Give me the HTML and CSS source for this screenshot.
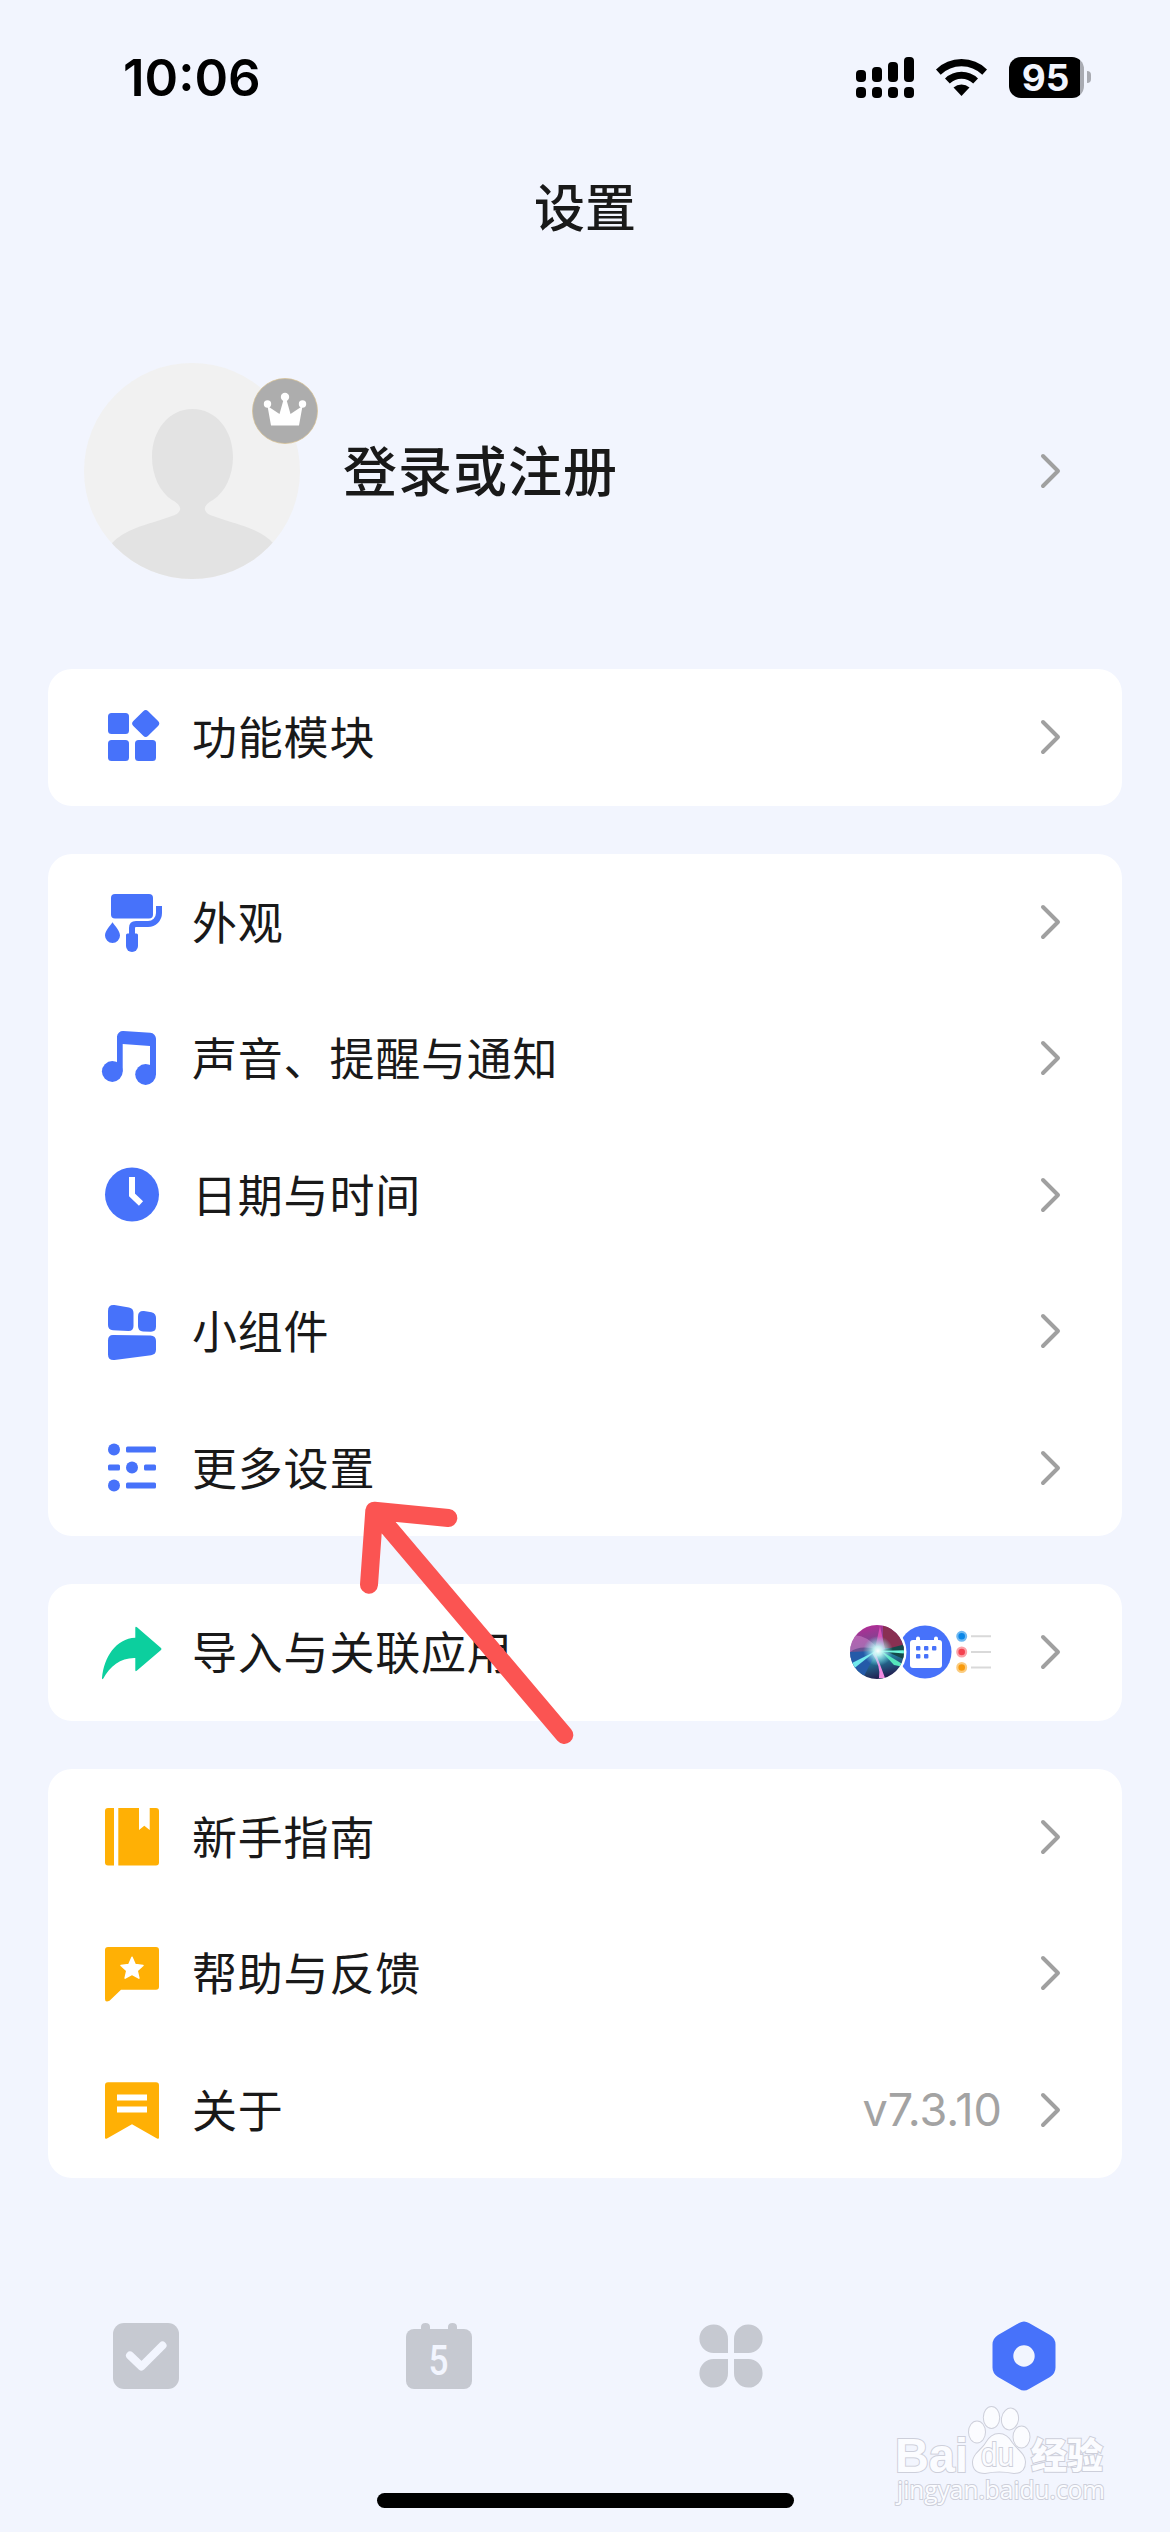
FILE: index.html
```html
<!DOCTYPE html>
<html lang="zh-CN">
<head>
<meta charset="utf-8">
<title>设置</title>
<link rel="stylesheet" href="styles.css">
</head>
<body>
<div class="screen">
  <header class="status">
    <span class="time">10:06</span>
    <div class="indicators">
      <svg class="signal" viewBox="0 0 58 41"><rect x="0" y="13" width="10" height="12" rx="4"/><rect x="16" y="10" width="10" height="15" rx="4"/><rect x="32" y="5" width="10" height="20" rx="4"/><rect x="48" y="0" width="10" height="25" rx="4"/><rect x="0" y="30" width="10" height="11" rx="4"/><rect x="16" y="30" width="10" height="11" rx="4"/><rect x="32" y="30" width="10" height="11" rx="4"/><rect x="48" y="30" width="10" height="11" rx="4"/></svg>
      <svg class="wifi" viewBox="0 0 51 37"><path d="M0 10.500Q10.500 0 25.500 0T51 10.500L46.300 15.700Q37.500 7.200 25.500 7.200T4.700 15.700z"/><path d="M9 19.500Q16 12.800 25.500 12.800T42 19.500L37.200 24.500Q32.200 19.800 25.500 19.800T13.800 24.500z"/><path d="M17.500 28.500Q21 25.500 25.500 25.500T33.500 28.500L25.500 37z"/></svg>
      <div class="battery"><span>95</span></div>
    </div>
  </header>
  <h1 class="title">设置</h1>

  <section class="profile">
    <div class="avatar">
      <svg viewBox="0 0 216 216"><defs><clipPath id="round"><circle cx="108" cy="108" r="108"/></clipPath></defs><circle cx="108" cy="108" r="108" fill="#f1f1f1"/><path clip-path="url(#round)" fill="#e3e3e3" d="M108.500 46C132 46 149 67 149 94C149 113 141 129 129 137C123 140 120 144 121 147C122 150 125 152 129 153C143 158 155 161 165 165Q181 171 190 181V216H27V181Q36 171 52 165C62 161 74 158 88 153C92 152 95 150 96 147C97 144 94 140 88 137C76 129 68 113 68 94C68 67 85 46 108.500 46z"/></svg>
      <svg class="badge" viewBox="0 0 66 66"><circle cx="33" cy="33" r="32.500" fill="#adadad" stroke="#d8c08e" stroke-width=".7"/><g fill="#fff"><path d="M15.500 28L27.500 36L32 20H34L38.500 36L50.500 28L47 47.500H19z"/><circle cx="33" cy="19" r="4.200"/><circle cx="15.500" cy="26" r="3.700"/><circle cx="50.500" cy="26" r="3.700"/></g></svg>
    </div>
    <span class="name">登录或注册</span>
    <svg class="chevron" viewBox="0 0 20 34"><path d="M2 2L17 17L2 32"/></svg>
  </section>

  <main class="cards">
    <section class="card">
      <div class="row"><svg class="icon blue" viewBox="0 0 60 60"><rect x="6" y="6" width="21" height="21" rx="3.500"/><rect x="6" y="33" width="21" height="21" rx="3.500"/><rect x="33" y="33" width="21" height="21" rx="3.500"/><rect x="33.200" y="6" width="21" height="21" rx="3.500" transform="rotate(45 43.700 16.500)"/></svg><span class="label">功能模块</span><svg class="chevron" viewBox="0 0 20 34"><path d="M2 2L17 17L2 32"/></svg></div>
    </section>

    <section class="card">
      <div class="row"><svg class="icon blue" viewBox="0 0 60 60"><rect x="9" y="2" width="42" height="24.500" rx="4"/><path d="M10.500 30.300C13 34 18 39 18 43.500A7.500 7.500 0 0 1 3 43.500C3 39 8 34 10.500 30.300z"/><path d="M24 43Q24 41.500 25.500 41.500H34.500Q36 41.500 36 43V54A6 6 0 0 1 24 54z"/><path class="line" d="M57 14V21A11 11 0 0 1 46 32H34Q30 32 30 36V43"/></svg><span class="label">外观</span><svg class="chevron" viewBox="0 0 20 34"><path d="M2 2L17 17L2 32"/></svg></div>
      <div class="row"><svg class="icon blue" viewBox="0 0 60 60"><path d="M15 43V8.500A6 6 0 0 1 21.300 3L48.300 4.800A6 6 0 0 1 54 10.800V46.500H48V18L20.700 16V43.500z"/><circle cx="10.300" cy="43.500" r="10.400"/><circle cx="43.600" cy="46.500" r="10.400"/></svg><span class="label">声音、提醒与通知</span><svg class="chevron" viewBox="0 0 20 34"><path d="M2 2L17 17L2 32"/></svg></div>
      <div class="row"><svg class="icon blue" viewBox="0 0 60 60"><circle cx="30" cy="29.500" r="27"/><path class="cut" d="M30 12V30L39 38.500"/></svg><span class="label">日期与时间</span><svg class="chevron" viewBox="0 0 20 34"><path d="M2 2L17 17L2 32"/></svg></div>
      <div class="row"><svg class="icon blue" viewBox="0 0 60 60"><path d="M12.500 4.100L27 6.500Q31.500 7.300 31.500 12V25Q31.500 30 26.500 30L11 29.200Q6 29 6 24V10Q6 3.500 12.500 4.100z"/><path d="M42 10L49.500 11.200Q54 12.200 54 17V25.500Q54 30.700 49 30.700L41 30.500Q36 30 36 25V15.500Q36 9.500 42 10z"/><path d="M11 34L48.500 34.500Q54 34.700 54 40V48.500Q54 53.500 49 54.200L12.500 59Q6 59.500 6 53.500V39.500Q6 34 11 34z"/></svg><span class="label">小组件</span><svg class="chevron" viewBox="0 0 20 34"><path d="M2 2L17 17L2 32"/></svg></div>
      <div class="row"><svg class="icon blue" viewBox="0 0 60 60"><circle cx="12" cy="11.500" r="6"/><rect x="24" y="8.500" width="30" height="6" rx="1.500"/><rect x="6" y="26.500" width="12" height="6" rx="1.500"/><circle cx="30" cy="29.500" r="6"/><rect x="42" y="26.500" width="12" height="6" rx="1.500"/><circle cx="12" cy="47.500" r="6"/><rect x="24" y="44.500" width="30" height="6" rx="1.500"/></svg><span class="label">更多设置</span><svg class="chevron" viewBox="0 0 20 34"><path d="M2 2L17 17L2 32"/></svg></div>
    </section>

    <section class="card">
      <div class="row"><svg class="icon green" viewBox="0 0 60 60"><path d="M33.300 6Q33.300 4 35 5.200L59 26Q60 27 59 28L35 48.500Q33.300 50 33.300 48V36C19 35.500 8 44 1.300 56.500Q0 58 0 56C2 35 14 16.500 33.300 15.700z"/></svg><span class="label">导入与关联应用</span>
        <svg class="apps" viewBox="0 0 144 56"><defs>
          <linearGradient id="orb" x1=".3" y1="0" x2=".55" y2="1"><stop offset="0" stop-color="#b52b96"/><stop offset=".35" stop-color="#76498f"/><stop offset=".65" stop-color="#247b9d"/><stop offset="1" stop-color="#211b4d"/></linearGradient>
          <radialGradient id="glow"><stop offset="0" stop-color="#fff"/><stop offset=".3" stop-color="#c6fff8" stop-opacity=".9"/><stop offset="1" stop-color="#7be6ef" stop-opacity="0"/></radialGradient>
          <clipPath id="orbclip"><circle cx="28" cy="28" r="27"/></clipPath></defs>
          <circle cx="76" cy="28" r="26.500" fill="#4772fa"/><circle cx="28" cy="28" r="29.500" fill="#fff"/>
          <g clip-path="url(#orbclip)"><rect x="1" y="1" width="54" height="54" fill="url(#orb)"/><path d="M34 0L60 5V25L34 24z" fill="#893052"/><path d="M34 26L57 20V36z" fill="#154a4b"/><path d="M1 28L28 27L14 54L0 48z" fill="#245aa8"/><path d="M0 12Q16 8 30 26Q10 20 0 29z" fill="#c87fc7" opacity=".6"/><path d="M31 2L36 25L25 29z" fill="#ef55c2" opacity=".75"/><path d="M26 27L36 54H30Q32 42 23 29z" fill="#f18be1"/><path d="M32 27L60 44L45 41z" fill="#55e7bb"/><path d="M27 27L3 46L1 40z" fill="#70e9ed"/><path d="M26 27L60 26V30z" fill="#6ff7de"/><circle cx="29" cy="27" r="15" fill="url(#glow)"/></g>
          <rect x="61" y="16" width="32" height="28" rx="3" fill="#fff"/><path d="M69 14.500V18M87 14.500V18" stroke="#fff" stroke-width="4" stroke-linecap="round"/><g fill="#4772fa"><rect x="67" y="22" width="4.400" height="4.400" rx="1"/><rect x="75" y="22" width="4.400" height="4.400" rx="1"/><rect x="83" y="22" width="4.400" height="4.400" rx="1"/><rect x="67" y="30" width="4.400" height="4.400" rx="1"/><rect x="75" y="30" width="4.400" height="4.400" rx="1"/></g>
          <g><circle cx="112.700" cy="12.300" r="4.400" fill="#0b87e8" stroke="#6fb9f2" stroke-width="2.200"/><circle cx="112.700" cy="28" r="4.400" fill="#f44250" stroke="#fba2a8" stroke-width="2.200"/><circle cx="112.700" cy="43.500" r="4.400" fill="#f89a0c" stroke="#fbcc80" stroke-width="2.200"/><path d="M122 12.300H142M122 28H142M122 43.500H142" stroke="#d9d9d9" stroke-width="2"/></g>
        </svg>
        <svg class="chevron" viewBox="0 0 20 34"><path d="M2 2L17 17L2 32"/></svg></div>
    </section>

    <section class="card">
      <div class="row"><svg class="icon orange" viewBox="0 0 60 60"><path d="M12 1V58.500H6Q3 58.500 3 55.500V4Q3 1 6 1z"/><path d="M16.300 1H37V23L42.300 18.700L47.700 23V1H54Q57 1 57 4V55.500Q57 58.500 54 58.500H16.300z"/></svg><span class="label">新手指南</span><svg class="chevron" viewBox="0 0 20 34"><path d="M2 2L17 17L2 32"/></svg></div>
      <div class="row"><svg class="icon orange" viewBox="0 0 60 60"><path d="M6 4H54Q57 4 57 7V43.700Q57 46.700 54 46.700H19L7.500 57.800Q3 60 3 56V7Q3 4 6 4z"/><path fill="#fff" stroke="#fff" stroke-width="1.500" stroke-linejoin="round" d="M30 14.200L33.200 21.600L41 22.400L35.200 27.600L36.900 35.200L30 31.400L23.100 35.200L24.800 27.600L19 22.400L26.800 21.600z"/></svg><span class="label">帮助与反馈</span><svg class="chevron" viewBox="0 0 20 34"><path d="M2 2L17 17L2 32"/></svg></div>
      <div class="row"><svg class="icon orange" viewBox="0 0 60 60"><path d="M6 2.300H54Q57 2.300 57 5.300V57.500Q57 59.500 55 58.500L30 44.300L5 58.500Q3 59.500 3 57.500V5.300Q3 2.300 6 2.300z"/><path fill="#fff" d="M15 14.500H45V20.500H15zM15 26.500H45V32.500H15z"/></svg><span class="label">关于</span><span class="version">v7.3.10</span><svg class="chevron" viewBox="0 0 20 34"><path d="M2 2L17 17L2 32"/></svg></div>
    </section>
  </main>

  <nav class="tabs">
    <div class="tab"><svg viewBox="0 0 70 70"><rect x="2" y="2" width="66" height="66" rx="11"/><path class="tick" d="M19 34.500L30.500 45.500L51.500 24.500"/></svg></div>
    <div class="tab"><svg viewBox="0 0 70 70"><rect x="2" y="8" width="66" height="60" rx="8"/><path d="M17 12V6Q17 2 21.500 2T26 6V12zM44 12V6Q44 2 48.500 2T53 6V12z"/><text x="24.500" y="53.500" textLength="20" lengthAdjust="spacingAndGlyphs">5</text></svg></div>
    <div class="tab"><svg viewBox="0 0 70 70"><path d="M32 32H18A14.300 14.300 0 1 1 32 18zM38 32H52A14.300 14.300 0 1 0 38 18zM32 38H18A14.300 14.300 0 1 0 32 52zM38 38H52A14.300 14.300 0 1 1 38 52z"/></svg></div>
    <div class="tab active"><svg viewBox="0 0 70 70"><path fill-rule="evenodd" d="M30 2Q35-1 40 2L61 14Q66.500 17.500 66.500 23.500V46.500Q66.500 52.500 61 56L40 68Q35 71 30 68L9 56Q3.500 52.500 3.500 46.500V23.500Q3.500 17.500 9 14zM35 24.300A10.700 10.700 0 1 0 35 45.700A10.700 10.700 0 1 0 35 24.300z"/></svg></div>
  </nav>
  <div class="home"></div>

  <svg class="arrow" viewBox="0 0 220 250"><path d="M108.300 28L34.300 20.700L29 94.700M34.300 20.700L224.300 245"/></svg>
  <svg class="watermark" viewBox="0 0 220 110">
    <g fill="#fbfcff" stroke="#cdcfda" stroke-width="2" paint-order="stroke">
      <text class="wm-latin" x="5" y="72" textLength="73" lengthAdjust="spacingAndGlyphs">Bai</text>
      <ellipse cx="87" cy="32" rx="8" ry="10.500"/><ellipse cx="101.500" cy="17.500" rx="7.700" ry="10.500"/><ellipse cx="120" cy="19" rx="8" ry="10.500" transform="rotate(10 120 19)"/><ellipse cx="131.500" cy="37" rx="8" ry="10.500"/>
      <path d="M109 34Q117 34 122 43C127 50 135 54 135 62Q135 73 124 73Q109 70 95 73Q83 73 83 62C83 54 92 50 96 43Q101 34 109 34z"/>
      <text class="wm-du" x="91" y="66" textLength="33" lengthAdjust="spacingAndGlyphs">du</text>
      <text class="wm-cjk" x="141" y="69">经验</text>
      <text class="wm-url" x="7" y="99" textLength="208" lengthAdjust="spacingAndGlyphs">jingyan.baidu.com</text>
    </g>
  </svg>
</div>
</body>
</html>
```
FILE: styles.css
```css
* { box-sizing: border-box; }
body { margin: 0; background: #f2f5fe; }
.screen {
  position: relative;
  display: flex;
  flex-direction: column;
  width: 1170px;
  height: 2532px;
  overflow: hidden;
  background: #f2f5fe;
  color: #191919;
  font-family: "Noto Sans CJK SC", sans-serif;
}
svg { display: block; flex: none; overflow: visible; }

.status {
  display: flex;
  align-items: center;
  justify-content: space-between;
  height: 155px;
  padding: 0 86px 0 123px;
  color: #000;
  font-family: Inter, sans-serif;
}
.time { font-size: 51px; font-weight: 600; }
.indicators { display: flex; align-items: center; }
.signal { width: 58px; height: 41px; margin-right: 22px; }
.wifi { width: 51px; height: 37px; margin-right: 22px; }
.battery {
  position: relative;
  width: 75px;
  height: 41px;
  border-radius: 12px;
  background: linear-gradient(90deg, #000 71px, #a9abb2 71px);
}
.battery::after {
  content: "";
  position: absolute;
  left: 78px;
  top: 14px;
  width: 4px;
  height: 12px;
  border-radius: 0 4px 4px 0;
  background: #a9abb2;
}
.battery span {
  display: block;
  width: 73px;
  color: #f2f5fe;
  font-size: 37px;
  font-weight: 700;
  line-height: 42px;
  text-align: center;
}

.title {
  height: 105px;
  margin: 0;
  font-size: 51px;
  font-weight: 500;
  line-height: 100px;
  text-align: center;
}

.profile {
  display: flex;
  align-items: center;
  height: 216px;
  margin: 103px 109px 90px 84px;
}
.avatar { position: relative; width: 216px; height: 216px; }
.badge { position: absolute; left: 168px; top: 15px; width: 66px; height: 66px; }
.name { flex: 1; margin-left: 43px; padding-bottom: 6px; font-size: 54px; font-weight: 500; letter-spacing: 1px; }
.chevron { width: 20px; height: 34px; fill: none; stroke: #a0a0a0; stroke-width: 4; stroke-linecap: round; stroke-linejoin: round; }

.cards { display: flex; flex-direction: column; gap: 48px; margin: 0 48px; }
.card { border-radius: 24px; background: #fff; }
.row { display: flex; align-items: center; height: 136.5px; padding: 0 61px 0 54px; }
.icon { width: 60px; height: 60px; }
.blue { fill: #4772fa; stroke: none; }
.green { fill: #0ccf9e; }
.orange { fill: #ffb005; }
.line { fill: none; stroke: #4772fa; stroke-width: 6; }
.cut { fill: none; stroke: #fff; stroke-width: 6; }
.label { flex: 1; margin-left: 30px; padding-bottom: 2px; font-size: 45px; line-height: 60px; letter-spacing: 0.8px; }
.apps { width: 144px; height: 56px; margin-right: 48px; }
.version { margin-right: 39px; color: #a3a3a3; font-family: Inter, sans-serif; font-size: 45px; }

.tabs { display: flex; margin-top: 143px; }
.tab { display: flex; flex: 1; justify-content: center; fill: #c6c9d1; }
.tab svg { width: 70px; height: 70px; }
.tab.active { fill: #4772fa; }
.tab text { fill: #f2f5fe; font-family: Roboto, sans-serif; font-size: 42px; font-weight: 500; }
.tick { fill: none; stroke: #f2f5fe; stroke-width: 8; stroke-linecap: round; stroke-linejoin: round; }
.home { width: 417px; height: 15px; margin: 102px auto 0; border-radius: 8px; background: #000; }

.arrow { position: absolute; left: 340px; top: 1490px; width: 220px; height: 250px; fill: none; stroke: #fb5452; stroke-width: 18; stroke-linecap: round; stroke-linejoin: round; }
.watermark { position: absolute; left: 890px; top: 2400px; width: 220px; height: 110px; }
.wm-latin { font: 700 49px "Liberation Sans", sans-serif; }
.wm-du { font: 400 34px "Liberation Sans", sans-serif; }
.wm-cjk { font: 900 36px "Noto Sans CJK SC", sans-serif; }
.wm-url { font: 400 26px "Open Sans", sans-serif; }
```
